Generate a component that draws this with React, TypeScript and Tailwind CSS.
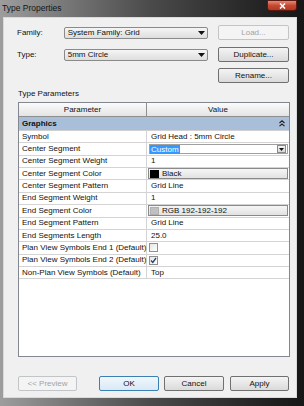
const rows: { name: string; kind: string; value?: string }[] = [
  { name: "Symbol", kind: "text", value: "Grid Head : 5mm Circle" },
  { name: "Center Segment", kind: "combo", value: "Custom" },
  { name: "Center Segment Weight", kind: "text", value: "1" },
  { name: "Center Segment Color", kind: "color", value: "Black" },
  { name: "Center Segment Pattern", kind: "text", value: "Grid Line" },
  { name: "End Segment Weight", kind: "text", value: "1" },
  { name: "End Segment Color", kind: "color2", value: "RGB 192-192-192" },
  { name: "End Segment Pattern", kind: "text", value: "Grid Line" },
  { name: "End Segments Length", kind: "text", value: "25.0" },
  { name: "Plan View Symbols End 1 (Default)", kind: "check" },
  { name: "Plan View Symbols End 2 (Default)", kind: "checked" },
  { name: "Non-Plan View Symbols (Default)", kind: "text", value: "Top" },
];

function Arrow() {
  return (
    <svg width="7" height="4" viewBox="0 0 7 4">
      <path d="M0 0h7L3.5 4z" fill="#111" />
    </svg>
  );
}

function Button({ label, disabled, focused, w }: { label: string; disabled?: boolean; focused?: boolean; w: string }) {
  return (
    <div
      className={`${w} h-[15px] flex items-center justify-center rounded-[2px] border ${
        disabled
          ? "border-[#c2c5c8] bg-[#f4f4f4] text-[#a3a3a3]"
          : focused
            ? "border-[#3c7fb1] bg-gradient-to-b from-[#f0f7fc] to-[#d9e9f5] text-[#111]"
            : "border-[#707070] bg-gradient-to-b from-[#f4f4f4] to-[#dadada] text-[#111]"
      }`}
    >
      {label}
    </div>
  );
}

function Combo({ label }: { label: string }) {
  return (
    <div className="w-[145px] h-[12px] flex items-center justify-between rounded-[2px] border border-[#8a8a8a] bg-gradient-to-b from-[#f5f5f5] to-[#dedede] pl-[3px] pr-[2px]">
      <span>{label}</span>
      <Arrow />
    </div>
  );
}

function Value({ r }: { r: (typeof rows)[number] }) {
  if (r.kind === "combo")
    return (
      <div className="h-full flex items-center pl-[2px] pr-[1px]">
        <div className="flex-1 h-[10px] flex items-center justify-between border border-[#a0a0a0] bg-white">
          <span className="bg-[#3399ff] text-white px-[1px] leading-[9px]">{r.value}</span>
          <div className="w-[9px] h-[8px] flex items-center justify-center border border-[#8a8a8a] bg-gradient-to-b from-[#f4f4f4] to-[#d8d8d8] mr-[1px]">
            <svg width="5" height="3" viewBox="0 0 5 3">
              <path d="M0 0h5L2.5 3z" fill="#111" />
            </svg>
          </div>
        </div>
      </div>
    );
  if (r.kind === "color" || r.kind === "color2")
    return (
      <div className="h-full flex items-center pl-[1px] pr-[1px]">
        <div className="flex-1 h-[11px] flex items-center gap-[3px] border border-[#8a8a8a] bg-gradient-to-b from-[#f6f6f6] to-[#e2e2e2]">
          <div className={`w-[9px] h-[8px] ml-[1px] ${r.kind === "color" ? "bg-black" : "bg-[#c0c0c0] border border-[#b0b0b0]"}`} />
          <span>{r.value}</span>
        </div>
      </div>
    );
  if (r.kind === "check" || r.kind === "checked")
    return (
      <div className="h-full flex items-center pl-[2px]">
        <div className="w-[9px] h-[9px] border border-[#8f8f8f] bg-gradient-to-br from-[#e6e6e6] to-white flex items-center justify-center">
          {r.kind === "checked" && (
            <svg width="7" height="7" viewBox="0 0 7 7">
              <path d="M1 3.5l1.8 2L6 1" stroke="#2a3f6a" strokeWidth="1.3" fill="none" />
            </svg>
          )}
        </div>
      </div>
    );
  return <div className="h-full flex items-center pl-[4px]">{r.value}</div>;
}

export default function App() {
  return (
    <div
      className="w-[304px] h-[406px] flex flex-col bg-gradient-to-r from-[#9d9d9d] via-[#4a4a4a] to-[#161616] text-[8px] text-[#111] overflow-hidden"
      style={{ fontFamily: '"Liberation Sans", Arial, sans-serif' }}
    >
      <div className="h-[17px] flex items-start justify-between">
        <span className="pl-[2px] pt-[2px] text-[8.5px] text-[#151515]">Type Properties</span>
        <div className="mr-[7px] w-[30px] h-[11px] rounded-b-[3px] border border-[#5a1a12] bg-gradient-to-b from-[#e08a78] via-[#c8472f] to-[#b23a22] flex items-center justify-center">
          <svg width="7" height="6" viewBox="0 0 7 6">
            <path d="M1 0.5l5 5M6 0.5l-5 5" stroke="white" strokeWidth="1.6" />
          </svg>
        </div>
      </div>
      <div className="ml-[3px] mr-[7px] mb-[8px] flex-1 flex flex-col bg-[#f0f0f0] border border-[#dadada] pl-[13px] pr-[7px]">
        <div className="mt-[7px] h-[15px] flex items-center">
          <span className="w-[47px]">Family:</span>
          <Combo label="System Family: Grid" />
          <div className="ml-[10px]">
            <Button label="Load..." disabled w="w-[71px]" />
          </div>
        </div>
        <div className="mt-[7px] h-[15px] flex items-center">
          <span className="w-[47px]">Type:</span>
          <Combo label="5mm Circle" />
          <div className="ml-[10px]">
            <Button label="Duplicate..." w="w-[71px]" />
          </div>
        </div>
        <div className="mt-[6px] flex justify-end">
          <Button label="Rename..." w="w-[71px]" />
        </div>
        <div className="mt-[6px] h-[10px] flex items-center pl-[1px]">Type Parameters</div>
        <div className="mt-[3px] ml-[1px] w-[272px] h-[255px] border border-[#828790] bg-white flex flex-col">
          <div className="h-[14px] flex border-b border-[#8e8f8f] bg-gradient-to-b from-[#fbfbfb] to-[#e4e4e4]">
            <div className="w-[128px] flex items-center justify-center border-r border-[#8e8f8f]">Parameter</div>
            <div className="flex-1 flex items-center justify-center">Value</div>
          </div>
          <div className="h-[14px] flex items-center justify-between bg-[#a9bfd9] pl-[3px] pr-[4px] border-b border-[#d0d0d0]">
            <span className="font-bold">Graphics</span>
            <svg width="6" height="7" viewBox="0 0 6 7">
              <path d="M0.5 3L3 0.8 5.5 3M0.5 6.2L3 4 5.5 6.2" stroke="#222" strokeWidth="1.1" fill="none" />
            </svg>
          </div>
          {rows.map((r) => (
            <div key={r.name} className="h-[12.36px] flex border-b border-[#d4d4d4]">
              <div className="w-[128px] flex items-center pl-[3px] border-r border-[#d4d4d4] whitespace-nowrap">{r.name}</div>
              <div className="flex-1">
                <Value r={r} />
              </div>
            </div>
          ))}
        </div>
        <div className="mt-[19px] ml-[1px] flex items-center">
          <Button label="<< Preview" disabled w="w-[60px]" />
          <div className="ml-[22px]">
            <Button label="OK" focused w="w-[60px]" />
          </div>
          <div className="ml-[5px]">
            <Button label="Cancel" w="w-[60px]" />
          </div>
          <div className="ml-[6px]">
            <Button label="Apply" w="w-[59px]" />
          </div>
        </div>
      </div>
    </div>
  );
}
